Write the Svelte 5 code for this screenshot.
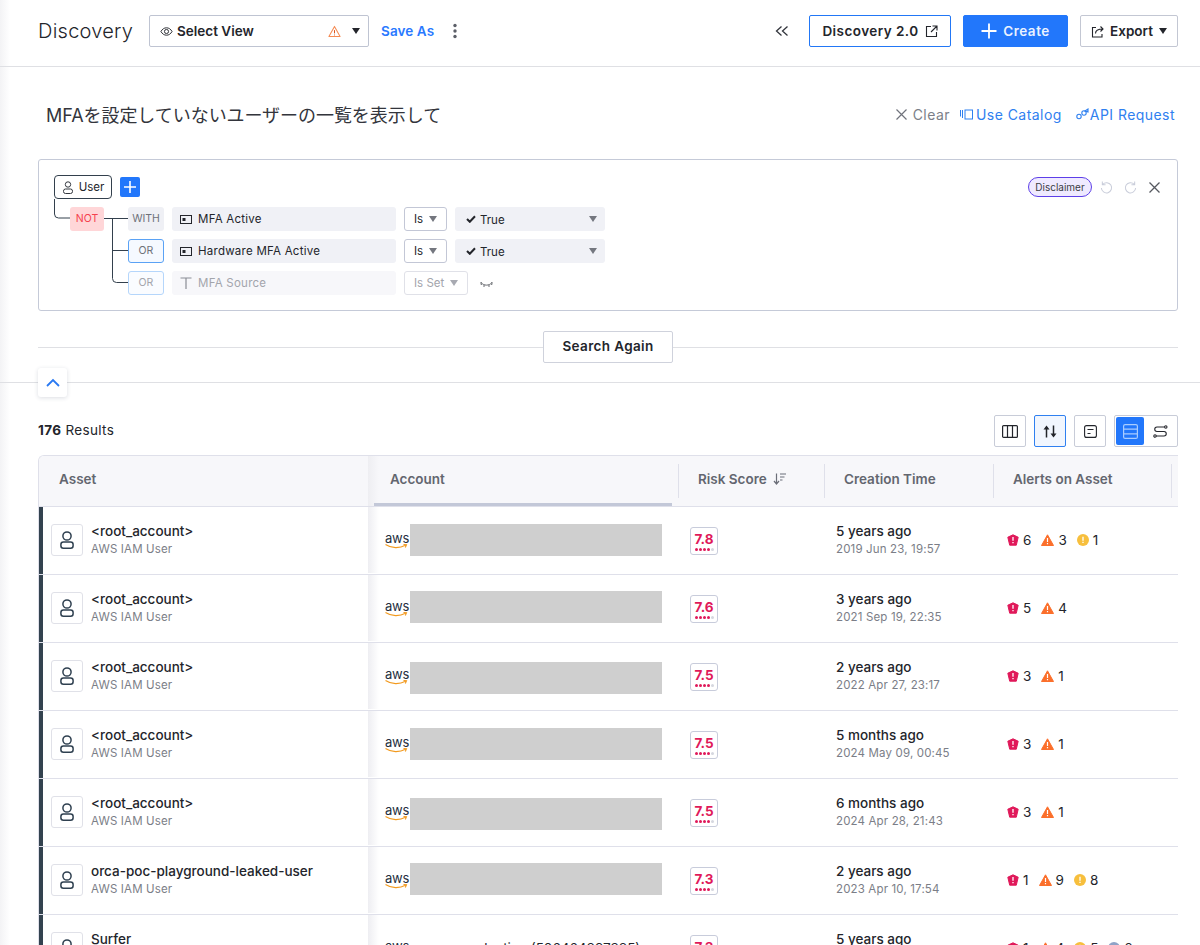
<script>
  const rows = [
    { name: '<root_account>', score: '7.8', ago: '5 years ago', date: '2019 Jun 23, 19:57', alerts: [6, 3, 1], shift: 0 },
    { name: '<root_account>', score: '7.6', ago: '3 years ago', date: '2021 Sep 19, 22:35', alerts: [5, 4], shift: -1 },
    { name: '<root_account>', score: '7.5', ago: '2 years ago', date: '2022 Apr 27, 23:17', alerts: [3, 1], shift: 2 },
    { name: '<root_account>', score: '7.5', ago: '5 months ago', date: '2024 May 09, 00:45', alerts: [3, 1], shift: 0 },
    { name: '<root_account>', score: '7.5', ago: '6 months ago', date: '2024 Apr 28, 21:43', alerts: [3, 1], shift: 2 },
    { name: 'orca-poc-playground-leaked-user', score: '7.3', ago: '2 years ago', date: '2023 Apr 10, 17:54', alerts: [1, 9, 8], shift: -1 },
    { name: 'Surfer', score: '7.3', ago: '5 years ago', date: '2020 Jan 12, 08:14', alerts: [1, 4, 5, 2], shift: 0, account: 'production (506464897385)' }
  ];
  const sev = ['crit', 'high', 'med', 'low'];
</script>

<div class="page">
  <header class="top">
    <h1>Discovery</h1>
    <div class="view-select">
      <svg class="i" width="13" height="13" viewBox="0 0 14 14" fill="none" stroke="#23252b" stroke-width="1"><path d="M1 7c1.500-2.600 3.500-4 6-4s4.500 1.400 6 4c-1.500 2.600-3.500 4-6 4s-4.500-1.400-6-4z"/><circle cx="7" cy="7" r="2.200"/></svg>
      <span class="view-label">Select View</span>
      <svg class="warn" width="13" height="13" viewBox="0 0 14 14" fill="none" stroke="#f58a52" stroke-width="1.100"><path d="M7 1.500L13 12.500H1z" stroke-linejoin="round"/><path d="M7 5.500v3.500" stroke="#d9541e"/><path d="M7 10.300v.9" stroke="#d9541e"/></svg>
      <span class="caret"></span>
    </div>
    <a class="save">Save As</a>
    <svg class="dots" width="4" height="16" viewBox="0 0 4 16" fill="#5c5f68"><circle cx="2" cy="2.500" r="1.700"/><circle cx="2" cy="8" r="1.700"/><circle cx="2" cy="13.500" r="1.700"/></svg>
    <span class="spacer"></span>
    <svg class="chev" width="14" height="12" viewBox="0 0 14 12" fill="none" stroke="#33363d" stroke-width="1.300"><path d="M6.500 1.500L1.500 6l5 4.500M12.500 1.500L7.500 6l5 4.500"/></svg>
    <button class="btn outline-blue">Discovery 2.0
      <svg width="13" height="13" viewBox="0 0 13 13" fill="none" stroke="#23252b" stroke-width="1.100"><path d="M6 1.500H1.500v10h10V7M7.500 1h4.500v4.500M12 1L6 7"/></svg>
    </button>
    <button class="btn primary">
      <svg width="16" height="16" viewBox="0 0 16 16" stroke="#fff" stroke-width="1.800"><path d="M8 .5v15M.5 8h15"/></svg>
      Create</button>
    <button class="btn outline">
      <svg width="13" height="13" viewBox="0 0 13 13" fill="none" stroke="#23252b" stroke-width="1.100"><path d="M5 2.500H1.500v9.500h9.500V9M4.500 8.500c0-3 2-4.500 7.500-4.500M9.500 1.500L12 4 9.500 6.500"/></svg>
      Export <span class="caret"></span></button>
  </header>

  <section class="query">
    <p class="prompt">MFAを設定していないユーザーの一覧を表示して</p>
    <div class="query-actions">
      <a class="clear">
        <svg width="11" height="11" viewBox="0 0 11 11" stroke="#70737c" stroke-width="1.200"><path d="M.5.500l10 10M10.500.500l-10 10"/></svg>
        Clear</a>
      <a class="link catalog">
        <svg width="13" height="11" viewBox="0 0 13 11" fill="none" stroke="#2f80f0" stroke-width="1"><path d="M.5 1v6.500M2.500 1v8"/><rect x="5" y="1" width="7.500" height="9"/></svg>
        Use Catalog</a>
      <a class="link api">
        <svg width="13" height="12" viewBox="0 0 13 12" fill="none" stroke="#2f80f0" stroke-width="1.100"><circle cx="3" cy="8.500" r="2.200"/><circle cx="8" cy="5" r="2.200"/><path d="M9 3l3-2v3z"/></svg>
        API Request</a>
    </div>
  </section>

  <section class="builder">
    <div class="builder-tools">
      <span class="disclaimer">Disclaimer</span>
      <svg class="undo" width="13" height="13" viewBox="0 0 14 14" fill="none" stroke="#c9cdda" stroke-width="1.100"><path d="M3 3.500a5.500 5.500 0 1 1-1.500 4M2.500.500v3.500h3.500"/></svg>
      <svg class="redo" width="13" height="13" viewBox="0 0 14 14" fill="none" stroke="#c9cdda" stroke-width="1.100"><path d="M11 3.500a5.500 5.500 0 1 0 1.500 4M11.500.500v3.500H8"/></svg>
      <svg class="close" width="11" height="11" viewBox="0 0 11 11" stroke="#55585f" stroke-width="1.300"><path d="M.5.500l10 10M10.500.500l-10 10"/></svg>
    </div>
    <div class="root-row">
      <span class="user-pill">
        <svg width="12" height="13" viewBox="0 0 12 13" fill="none" stroke="#34383f" stroke-width="1"><circle cx="6" cy="3.500" r="2.700"/><rect x="1.500" y="8" width="9" height="4.500" rx="2"/></svg>
        User</span>
      <span class="add">
        <svg width="12" height="12" viewBox="0 0 12 12" stroke="#fff" stroke-width="1.600"><path d="M6 0v12M0 6h12"/></svg>
      </span>
    </div>
    <div class="tree">
      <svg class="wires" width="80" height="100" viewBox="0 0 80 100" fill="none" stroke="#33404d" stroke-width="1">
        <path d="M.5 0v15a4 4 0 0 0 4 4h12M50 19.500h24M58.500 19.500v60a4 4 0 0 0 4 4H74M58.500 51.500H74"/>
      </svg>
      <span class="not">NOT</span>
      <div class="conds">
        <div class="cond">
          <span class="op with">WITH</span>
          <span class="field"><svg class="bool" width="12" height="9" viewBox="0 0 12 9" fill="none" stroke="#23252b"><rect x=".5" y=".5" width="11" height="8"/><rect x="2.500" y="3" width="3" height="3" fill="#23252b" stroke="none"/></svg>MFA Active</span>
          <span class="is">Is <span class="caret grey"></span></span>
          <span class="val"><svg width="10" height="8" viewBox="0 0 10 8" fill="none" stroke="#23252b" stroke-width="2"><path d="M1 4l2.800 2.800L9 1.200"/></svg><span class="val-text">True</span><span class="caret grey end"></span></span>
        </div>
        <div class="cond">
          <span class="op or">OR</span>
          <span class="field"><svg class="bool" width="12" height="9" viewBox="0 0 12 9" fill="none" stroke="#23252b"><rect x=".5" y=".5" width="11" height="8"/><rect x="2.500" y="3" width="3" height="3" fill="#23252b" stroke="none"/></svg>Hardware MFA Active</span>
          <span class="is">Is <span class="caret grey"></span></span>
          <span class="val"><svg width="10" height="8" viewBox="0 0 10 8" fill="none" stroke="#23252b" stroke-width="2"><path d="M1 4l2.800 2.800L9 1.200"/></svg><span class="val-text">True</span><span class="caret grey end"></span></span>
        </div>
        <div class="cond faded">
          <span class="op or">OR</span>
          <span class="field"><svg class="bool" width="12" height="12" viewBox="0 0 12 12" fill="none" stroke="#8a8d95" stroke-width="1.200"><path d="M.5 1h11M6 1v11"/></svg>MFA Source</span>
          <span class="is">Is Set <span class="caret grey"></span></span>
          <svg class="lash" width="13" height="7" viewBox="0 0 13 7" fill="none" stroke="#44474e" stroke-width=".8"><path d="M1 1.500c3 3.500 8 3.500 11 0M1 1v1.500M12 1v1.500M4 4v2M9 4v2M.500 3l1.500.500M12.500 3l-1.500.500"/></svg>
        </div>
      </div>
    </div>
  </section>

  <div class="again-row"><button class="again">Search Again</button></div>

  <div class="fold-row">
    <button class="fold" aria-label="Collapse">
      <svg width="14" height="9" viewBox="0 0 14 9" fill="none" stroke="#2979f2" stroke-width="1.800"><path d="M1 8l6-6 6 6"/></svg>
    </button>
  </div>

  <div class="results-bar">
    <span class="count"><b>176</b> Results</span>
    <div class="tools">
      <button class="tool" aria-label="Columns"><svg width="16" height="13" viewBox="0 0 16 13" fill="none" stroke="#23252b" stroke-width="1.200"><rect x=".6" y=".6" width="14.800" height="11.800" rx="1"/><path d="M5.500 .6v11.800M10.500 .6v11.800"/></svg></button>
      <button class="tool active" aria-label="Sort"><svg width="14" height="13" viewBox="0 0 14 13" fill="#23252b" stroke="#23252b" stroke-width="1.500"><path d="M3.500 12.500V2" fill="none"/><path d="M.5 4.500l3-4 3 4z" stroke="none"/><path d="M10.500 .5V11" fill="none"/><path d="M7.500 8.500l3 4 3-4z" stroke="none"/></svg></button>
      <button class="tool" aria-label="Summary"><svg width="13" height="13" viewBox="0 0 13 13" fill="none" stroke="#23252b" stroke-width="1.100"><rect x=".6" y=".6" width="11.800" height="11.800" rx="2"/><path d="M3.500 4.500h6M3.500 8.500h3"/></svg></button>
      <div class="seg">
        <button class="seg-on" aria-label="Table"><svg width="15" height="15" viewBox="0 0 15 15" fill="none" stroke="#a9ccff" stroke-width="1.200"><rect x=".6" y=".6" width="13.800" height="13.800" rx="1.500"/><path d="M.6 5.200h13.800M.6 9.800h13.800"/></svg></button>
        <button class="seg-off" aria-label="Flow"><svg width="15" height="13" viewBox="0 0 15 13" fill="none" stroke="#23252b" stroke-width="1.100"><path d="M11.500 2H4a2.200 2.200 0 0 0 0 4.500h7a2.200 2.200 0 0 1 0 4.500H3"/><circle cx="12.800" cy="2" r="1.200"/><circle cx="2" cy="11" r="1.200"/></svg></button>
      </div>
    </div>
  </div>

  <div class="table">
    <div class="thead">
      <div class="th first">Asset</div>
      <div class="th account">Account</div>
      <div class="th sep">Risk Score
        <svg width="14" height="12" viewBox="0 0 14 12" fill="none" stroke="#6b6e78" stroke-width="1.200"><path d="M3.500 .5v10M1 8l2.500 3L6 8" /><path d="M7 1h6M7 4h4.500M7 7h2.500"/></svg>
      </div>
      <div class="th sep">Creation Time</div>
      <div class="th sep">Alerts on Asset</div>
      <div class="th sep last"></div>
    </div>
    {#each rows as r}
      <div class="tr">
        <div class="td asset">
          <span class="asset-icon"><svg width="14" height="18" viewBox="0 0 14 18" fill="none" stroke="#2f4050" stroke-width="1.500"><circle cx="7" cy="5" r="4.100"/><rect x=".9" y="11" width="12.200" height="6.200" rx="2.500"/></svg></span>
          <span class="asset-text"><span class="name">{r.name}</span><span class="sub">AWS IAM User</span></span>
        </div>
        <div class="td acct">
          <span class="aws"><span class="aws-word">aws</span><svg width="23" height="5" viewBox="0 0 23 5" fill="none" stroke="#f29a1f" stroke-width="1.100"><path d="M.5 .5c6 4 14 4 20 .7M18.500 .5l3 .3-1.200 2.600"/></svg></span>
          {#if r.account}
            <span class="acct-name">{r.account}</span>
          {:else}
            <span class="redact" style="transform: translateY({r.shift}px)"></span>
          {/if}
        </div>
        <div class="td risk">
          <span class="badge">
            <span class="score">{r.score}</span>
            <span class="pips"><i></i><i></i><i></i><i></i><i class="off"></i></span>
          </span>
        </div>
        <div class="td time"><span class="name">{r.ago}</span><span class="sub">{r.date}</span></div>
        <div class="td alerts">
          {#each r.alerts as n, k}
            <span class="alert">
              {#if sev[k] === 'crit'}
                <svg width="12" height="12" viewBox="0 0 12 12"><path d="M6 .8L11.200 3.200 9.300 11.200H2.700L.8 3.200z" fill="#e0195a" stroke="#e0195a" stroke-linejoin="round"/><path d="M6 3v3.800M6 8v1.200" stroke="#fff" stroke-width="1.300"/></svg>
              {:else if sev[k] === 'high'}
                <svg width="13" height="12" viewBox="0 0 13 12"><path d="M6.500 .8L12.500 11.500H.5z" fill="#fb6f2b" stroke="#fb6f2b" stroke-linejoin="round"/><path d="M6.500 4v4M6.500 9v1.300" stroke="#fff" stroke-width="1.200"/></svg>
              {:else if sev[k] === 'med'}
                <svg width="12" height="12" viewBox="0 0 12 12"><circle cx="6" cy="6" r="6" fill="#f7bf3d"/><path d="M6 2.800v3.900M6 7.800v1.300" stroke="#fff" stroke-width="1.300"/></svg>
              {:else}
                <svg width="12" height="12" viewBox="0 0 12 12"><circle cx="6" cy="6" r="6" fill="#8fa3c7"/></svg>
              {/if}
              {n}
            </span>
          {/each}
        </div>
      </div>
    {/each}
  </div>
</div>

<style>
  :global(body) { margin: 0; background: #fff; }
  .page {
    width: 1200px; height: 945px; overflow: hidden; box-sizing: border-box;
    font-family: "Inter", "Noto Sans CJK JP", sans-serif; color: #23252b;
    background: linear-gradient(90deg, #f3f3f5 0, #fff 10px);
  }
  button { font-family: inherit; }
  a { cursor: pointer; }

  .caret { display: inline-block; width: 0; height: 0; border-left: 4.500px solid transparent; border-right: 4.500px solid transparent; border-top: 6px solid #23252b; }
  .caret.grey { border-top-color: #74777f; }

  .top { box-sizing: content-box; border-bottom: 1px solid #dfe0e4; display: flex; align-items: center; padding: 0 22px 4px 38px; height: 62px; }
  h1 { font-size: 20px; font-weight: 300; margin: 0 16px 0 0; width: 95px; white-space: nowrap; letter-spacing: .25px; }
  .view-select { width: 220px; height: 32px; box-sizing: border-box; border: 1px solid #bfc4d2; border-radius: 2px; display: flex; align-items: center; padding: 0 8px 0 10px; font-size: 14px; font-weight: 600; gap: 4px; }
  .view-label { flex: 1; font-size: 13.500px; }
  .warn { margin-right: 7px; }
  .save { margin-left: 12px; color: #2979ff; font-size: 13.500px; font-weight: 600; width: 54px; white-space: nowrap; letter-spacing: .1px; }
  .dots { margin-left: 18px; }
  .spacer { flex: 1; }
  .chev { margin-right: 20px; }
  .btn { height: 32px; box-sizing: border-box; border-radius: 2px; font-size: 13.500px; font-weight: 600; display: flex; align-items: center; justify-content: center; gap: 6px; background: #fff; padding: 0; color: #23252b; white-space: nowrap; }
  .outline-blue { width: 142px; border: 1px solid #2277f6; margin-right: 12px; letter-spacing: .45px; }
  .primary { width: 105px; background: #2277fb; border: 1px solid #2277fb; color: #eaf2ff; margin-right: 12px; letter-spacing: .5px; }
  .outline { width: 98px; border: 1px solid #c3c7d3; }

  .query { height: 92px; box-sizing: border-box; display: flex; align-items: center; justify-content: space-between; padding: 2px 25px 0 46px; }
  .prompt { margin: 0; font-size: 18px; font-weight: 400; white-space: nowrap; color: #33353c; letter-spacing: -.05px; }
  .query-actions { display: flex; font-size: 14px; letter-spacing: .45px; }
  .query-actions a { display: flex; align-items: center; gap: 3px; white-space: nowrap; }
  .clear { color: #7c7f88; gap: 6px !important; }
  .catalog { margin-left: 10px; }
  .api { margin-left: 14px; gap: 1px !important; }
  .link { color: #2f80f0; }

  .builder { position: relative; margin: 0 22px 0 38px; height: 152px; box-sizing: border-box; border: 1px solid #c5cad8; border-radius: 3px; padding: 15px 15px 0; }
  .builder-tools { position: absolute; top: 17px; right: 17px; display: flex; align-items: center; height: 20px; }
  .disclaimer { width: 64px; box-sizing: border-box; text-align: center; font-size: 10px; background: #efeaff; border: 1px solid #5d3fe8; border-radius: 10px; height: 20px; line-height: 18px; color: #3a3c44; }
  .undo { margin-left: 8px; }
  .redo { margin-left: 11px; }
  .close { margin-left: 12px; }
  .root-row { display: flex; align-items: center; gap: 8px; }
  .user-pill { width: 58px; height: 24px; box-sizing: border-box; border: 1px solid #33404d; border-radius: 4px; display: flex; align-items: center; justify-content: center; gap: 5px; font-size: 11.500px; }
  .add { width: 20px; height: 20px; background: #2277fb; border-radius: 2px; display: flex; align-items: center; justify-content: center; }
  .tree { position: relative; display: flex; align-items: flex-start; margin-top: 8px; padding-left: 16px; }
  .wires { position: absolute; left: 0; top: -8px; }
  .not { position: relative; width: 34px; height: 24px; line-height: 24px; text-align: center; background: #ffd6d8; color: #f5414d; border-radius: 3px; font-size: 10.500px; }
  .conds { margin-left: 24px; display: flex; flex-direction: column; gap: 8px; position: relative; }
  .cond { display: flex; align-items: center; gap: 8px; height: 24px; }
  .op { width: 36px; height: 24px; box-sizing: border-box; border-radius: 3px; text-align: center; line-height: 22px; font-size: 10.500px; color: #6e7179; }
  .with { background: #eff0f5; line-height: 24px; }
  .or { background: #f5f9ff; border: 1px solid #5aa2f5; }
  .field { width: 224px; height: 24px; box-sizing: border-box; background: #f0f1f6; border-radius: 3px; display: flex; align-items: center; padding-left: 8px; gap: 6px; font-size: 11.500px; white-space: nowrap; letter-spacing: .25px; }
  .is { height: 24px; box-sizing: border-box; width: 43px; border: 1px solid #c3c7d6; border-radius: 3px; font-size: 11.500px; display: flex; align-items: center; padding-left: 9px; gap: 6px; }
  .val { width: 150px; height: 24px; box-sizing: border-box; background: #f0f1f6; border-radius: 3px; display: flex; align-items: center; padding-left: 11px; font-size: 11.500px; gap: 4px; }
  .val-text { padding-top: 1px; }
  .val .end { margin-left: auto; margin-right: 8px; }
  .faded .op, .faded .field, .faded .is { color: #a3a5ac; }
  .faded .or { border-color: #b5d6fb; background: #fafcff; }
  .faded .field { background: #f7f7fa; }
  .faded .is { width: 64px; border-color: #e0e1e8; white-space: nowrap; }
  .faded .caret { border-top-color: #a8aab2; }
  .lash { margin-left: 4px; margin-top: 3px; }

  .again-row { margin: 20px 22px 0 38px; height: 32px; display: flex; justify-content: center; background: linear-gradient(#dfe0e4, #dfe0e4) 0 16px / 100% 1px no-repeat; }
  .again { width: 130px; height: 32px; padding: 0 0 2px; background: #fff; border: 1px solid #cfd2dc; border-radius: 2px; font-size: 13.500px; font-weight: 600; letter-spacing: .35px; color: #23252b; }

  .fold-row { margin-top: 5px; height: 29px; padding-left: 38px; background: linear-gradient(#dfe0e4, #dfe0e4) 0 14px / 100% 1px no-repeat; }
  .fold { width: 29px; height: 29px; background: #fff; border: 0; border-radius: 3px; box-shadow: 0 1px 4px rgba(40, 50, 80, .16); display: flex; align-items: center; justify-content: center; padding: 0; }

  .results-bar { margin: 18px 22px 0 38px; height: 32px; display: flex; align-items: center; justify-content: space-between; font-size: 13.500px; letter-spacing: .35px; }
  .count { padding-bottom: 2px; }
  .count b { font-weight: 700; }
  .tools { display: flex; align-items: center; gap: 8px; }
  .tool { width: 32px; height: 32px; box-sizing: border-box; background: #fff; border: 1px solid #c8ccd8; border-radius: 2px; padding: 0; display: flex; align-items: center; justify-content: center; }
  .tool.active { background: #f1f6fe; border-color: #2f80f0; }
  .seg { width: 64px; height: 32px; box-sizing: border-box; border: 1px solid #c8ccd8; border-radius: 2px; display: flex; padding: 1px; }
  .seg button { border: 0; padding: 0; background: #fff; display: flex; align-items: center; justify-content: center; }
  .seg-on { width: 28px; background: #2277fb !important; border-radius: 2px; }
  .seg-off { flex: 1; }

  .table { margin: 8px 22px 0 38px; border-top: 1px solid #dfe0ea; border-left: 1px solid #dfe0ea; border-radius: 6px 0 0 0; overflow: hidden; }
  .thead, .tr { display: grid; grid-template-columns: 329px 310px 146px 169px 178px 7px; }
  .thead { height: 50px; background: #f7f7fa; border-bottom: 1px solid #dfe0ea; font-size: 13.500px; font-weight: 600; color: #63666f; }
  .th { display: flex; align-items: center; white-space: nowrap; gap: 6px; margin: 8px 0; position: relative; padding: 0 0 4px 19px; box-sizing: border-box; }
  .th.first { padding-left: 20px; }
  .th.sep { border-left: 1px solid #dfe0ea; }
  .th.last { padding: 0; }
  .th.account { margin: 0; padding: 0 0 4px 22px; }
  .th.account::after { content: ""; position: absolute; left: 6px; right: 6px; bottom: 0; height: 3px; background: #c3c8d8; }
  .th.account::before, .acct::before { content: ""; position: absolute; left: 0; top: 0; bottom: 0; width: 11px; background: linear-gradient(90deg, #eeeef2, rgba(255,255,255,0)); }
  .tr { height: 68px; box-sizing: border-box; padding-bottom: 1px; border-bottom: 1px solid #dfe0ea; position: relative; }
  .td { display: flex; align-items: center; position: relative; }
  .asset { padding-left: 12px; gap: 8px; }
  .asset::before { content: ""; position: absolute; left: 0; top: 0; bottom: -1px; width: 4px; background: #33424f; }
  .asset-icon { width: 32px; height: 32px; box-sizing: border-box; border: 1px solid #e0e1e8; border-radius: 3px; display: flex; align-items: center; justify-content: center; background: #fff; }
  .asset-text, .time { flex-direction: column; display: flex; padding-bottom: 1px; }
  .time { align-items: flex-start; justify-content: center; padding-left: 12px; }
  .name { font-size: 13.500px; font-weight: 500; line-height: 18px; white-space: nowrap; }
  .sub { font-size: 11.500px; color: #7b7e87; line-height: 16px; margin-top: 1px; white-space: nowrap; letter-spacing: .15px; }
  .acct { padding-left: 17px; }
  .aws { width: 25px; display: flex; flex-direction: column; align-items: flex-start; line-height: 9px; margin-top: 1px; }
  .aws-word { font-size: 13px; line-height: 11px; color: #252f3e; letter-spacing: -.2px; }
  .redact { width: 252px; height: 32px; background: #cfcfcf; }
  .acct-name { font-size: 13.500px; padding-left: 48px; white-space: nowrap; }
  .risk { padding-left: 12px; }
  .badge { width: 28px; height: 28px; margin-top: 2px; box-sizing: border-box; border: 1px solid #c8ccdb; border-radius: 3px; display: flex; flex-direction: column; align-items: center; justify-content: center; }
  .score { color: #e0195a; font-size: 13.500px; font-weight: 700; line-height: 14px; }
  .pips { display: flex; gap: 1px; margin-top: 2px; }
  .pips i { width: 3px; height: 3px; border-radius: 50%; background: #e0195a; }
  .pips i.off { background: #d5d7df; }
  .alerts { padding-left: 14px; gap: 10px; font-size: 13.500px; }
  .alert { display: flex; align-items: center; gap: 4px; }
</style>
